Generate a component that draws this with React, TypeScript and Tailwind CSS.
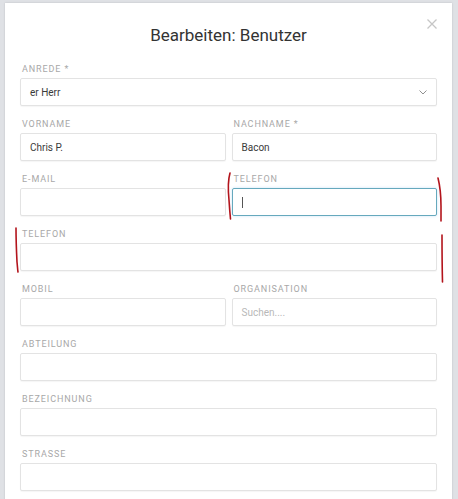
import React from "react";

type FieldProps = {
  label: string;
  value?: string;
  placeholder?: string;
  focused?: boolean;
};

const labelCls = "mb-[4px] ml-[2px] h-[10px] text-[9px] leading-[10px] tracking-[0.9px] text-[#a8a8a8] uppercase";

const Field: React.FC<FieldProps> = ({ label, value, placeholder, focused }) => (
  <div className="flex flex-col">
    <label className={labelCls}>{label}</label>
    <div
      className={
        focused
          ? "flex h-[28px] items-center rounded-[2px] border border-[#66a9bd] bg-white px-[9px] text-[10px] text-[#3a3a3a] shadow-[0_0_3px_rgba(102,175,233,0.35)]"
          : "flex h-[28px] items-center rounded-[2px] border border-[#e3e3e3] bg-white px-[9px] text-[10px] text-[#3a3a3a] shadow-[0_1px_1px_rgba(0,0,0,0.04)]"
      }
    >
      {focused && <span className="h-[11px] w-px bg-[#555]" />}
      {value && <span>{value}</span>}
      {placeholder && <span className="text-[#b8b8b8]">{placeholder}</span>}
    </div>
  </div>
);

const App: React.FC = () => {
  return (
    <div className="relative h-[499px] w-[458px] overflow-hidden bg-[#dfe1e5] pt-[3px] pl-[5px] font-['Roboto',Arial,sans-serif]">
      <div className="relative h-[500px] w-[447px] bg-white px-[15px] pt-[20px] shadow-[0_0_2px_rgba(0,0,0,0.15)]">
        <button className="absolute top-[16px] right-[15px]">
          <svg width="10" height="10" viewBox="0 0 10 10" stroke="#c6c6c6" strokeWidth="1.3">
            <path d="M0.5 0.5l9 9M9.5 0.5l-9 9" />
          </svg>
        </button>
        <h1 className="h-[24px] text-center text-[17px] leading-[24px] text-[#333]">Bearbeiten: Benutzer</h1>

        <div className="mt-[17px] flex flex-col gap-[13px]">
          <div className="flex flex-col">
            <label className={labelCls}>Anrede *</label>
            <div className="flex h-[28px] items-center justify-between rounded-[2px] border border-[#e3e3e3] bg-white pr-[9px] pl-[9px] text-[10px] text-[#3a3a3a] shadow-[0_1px_1px_rgba(0,0,0,0.04)]">
              <span>er Herr</span>
              <svg width="8" height="5" viewBox="0 0 8 5" fill="none" stroke="#909090" strokeWidth="1">
                <path d="M0.5 0.5l3.5 3.5 3.5-3.5" />
              </svg>
            </div>
          </div>

          <div className="grid grid-cols-2 gap-[6px]">
            <Field label="Vorname" value="Chris P." />
            <Field label="Nachname *" value="Bacon" />
          </div>

          <div className="grid grid-cols-2 gap-[6px]">
            <Field label="E-Mail" />
            <Field label="Telefon" focused />
          </div>

          <Field label="Telefon" />

          <div className="grid grid-cols-2 gap-[6px]">
            <Field label="Mobil" />
            <Field label="Organisation" placeholder="Suchen...." />
          </div>

          <Field label="Abteilung" />
          <Field label="Bezeichnung" />
          <Field label="Strasse" />
        </div>
      </div>

      {/* hand-drawn red marks */}
      <svg className="pointer-events-none absolute top-0 left-0" width="458" height="499" fill="none" stroke="#b3141c" strokeWidth="1.6" strokeLinecap="round">
        <path d="M230 173 C228 180 228 190 229 200 C229.5 208 230 214 230.5 219" />
        <path d="M438 178 C440 186 441 196 441 206 C441 212 441 217 441 221" />
        <path d="M16 228 C16 240 16.5 252 17 262 C17.5 266 17.5 269 18 272" />
        <path d="M442 235 C442 248 442 262 442.5 282" />
      </svg>
    </div>
  );
};

export default App;
